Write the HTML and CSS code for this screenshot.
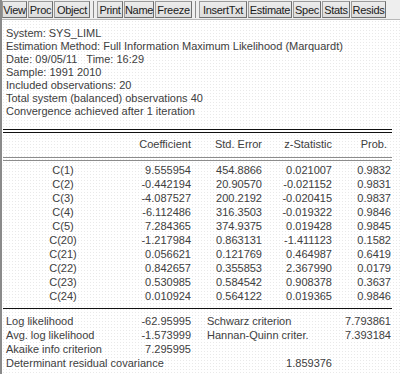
FILE: index.html
```html
<!DOCTYPE html>
<html>
<head>
<meta charset="utf-8">
<link rel="stylesheet" href="styles.css">
</head>
<body>
<div class="win">
  <div class="toolbar">
    <span class="btn b-view">View</span>
    <span class="btn b-proc">Proc</span>
    <span class="btn b-object">Object</span>
    <span class="sep"></span>
    <span class="btn b-print">Print</span>
    <span class="btn b-name">Name</span>
    <span class="btn b-freeze">Freeze</span>
    <span class="sep"></span>
    <span class="btn b-insert">InsertTxt</span>
    <span class="btn b-estimate">Estimate</span>
    <span class="btn b-spec">Spec</span>
    <span class="btn b-stats">Stats</span>
    <span class="btn b-resids">Resids</span>
  </div>
  <div class="body">
    <div class="info">
      <div>System: SYS_LIML</div>
      <div>Estimation Method: Full Information Maximum Likelihood (Marquardt)</div>
      <div>Date: 09/05/11 &nbsp; Time: 16:29</div>
      <div>Sample: 1991 2010</div>
      <div>Included observations: 20</div>
      <div>Total system (balanced) observations 40</div>
      <div>Convergence achieved after 1 iteration</div>
    </div>
    <div class="rule-double"></div>
    <div class="grid head">
      <span></span>
      <span class="num">Coefficient</span>
      <span class="num">Std. Error</span>
      <span class="num">z-Statistic</span>
      <span class="num prob-h">Prob.</span>
    </div>
    <div class="rule-gray"></div>
    <div class="grid rows">
      <span class="lbl">C(1)</span><span class="num">9.555954</span><span class="num">454.8866</span><span class="num">0.021007</span><span class="num">0.9832</span>
      <span class="lbl">C(2)</span><span class="num">-0.442194</span><span class="num">20.90570</span><span class="num">-0.021152</span><span class="num">0.9831</span>
      <span class="lbl">C(3)</span><span class="num">-4.087527</span><span class="num">200.2192</span><span class="num">-0.020415</span><span class="num">0.9837</span>
      <span class="lbl">C(4)</span><span class="num">-6.112486</span><span class="num">316.3503</span><span class="num">-0.019322</span><span class="num">0.9846</span>
      <span class="lbl">C(5)</span><span class="num">7.284365</span><span class="num">374.9375</span><span class="num">0.019428</span><span class="num">0.9845</span>
      <span class="lbl">C(20)</span><span class="num">-1.217984</span><span class="num">0.863131</span><span class="num">-1.411123</span><span class="num">0.1582</span>
      <span class="lbl">C(21)</span><span class="num">0.056621</span><span class="num">0.121769</span><span class="num">0.464987</span><span class="num">0.6419</span>
      <span class="lbl">C(22)</span><span class="num">0.842657</span><span class="num">0.355853</span><span class="num">2.367990</span><span class="num">0.0179</span>
      <span class="lbl">C(23)</span><span class="num">0.530985</span><span class="num">0.584542</span><span class="num">0.908378</span><span class="num">0.3637</span>
      <span class="lbl">C(24)</span><span class="num">0.010924</span><span class="num">0.564122</span><span class="num">0.019365</span><span class="num">0.9846</span>
    </div>
    <div class="rule"></div>
    <div class="grid stats">
      <span class="slbl">Log likelihood</span><span class="num">-62.95995</span><span class="slbl2">Schwarz criterion</span><span class="num">7.793861</span>
      <span class="slbl">Avg. log likelihood</span><span class="num">-1.573999</span><span class="slbl2">Hannan-Quinn criter.</span><span class="num">7.393184</span>
      <span class="slbl">Akaike info criterion</span><span class="num">7.295995</span><span></span><span></span>
      <span class="slbl wide">Determinant residual covariance</span><span class="num">1.859376</span><span></span><span></span>
    </div>
  </div>
</div>
</body>
</html>
```
FILE: styles.css
```css
html, body {
  margin: 0;
  padding: 0;
  background: #ffffff;
}

.win {
  width: 400px;
  height: 374px;
  overflow: hidden;
  border-left: 2px solid #8a8a8a;
  box-sizing: border-box;
  font-family: "Liberation Sans", Arial, sans-serif;
  color: #404040;
  font-size: 11px;
}

.toolbar {
  display: flex;
  align-items: stretch;
  height: 18px;
  padding-top: 1px;
  background: #eeeeee;
  border-bottom: 1px solid #b8b8b8;
  box-sizing: content-box;
}

.btn {
  display: flex;
  align-items: center;
  justify-content: center;
  height: 17px;
  box-sizing: border-box;
  border: 1px solid #9a9a9a;
  border-right-color: #6e6e6e;
  border-bottom-color: #6e6e6e;
  background: linear-gradient(#ececec, #dcdcdc);
  color: #1a1a1a;
  font-family: "Liberation Sans", Arial, sans-serif;
  font-size: 11px;
  letter-spacing: -0.3px;
  margin-right: 1px;
  white-space: nowrap;
}

.sep {
  width: 1px;
  height: 17px;
  background: #8a8a8a;
  margin: 0 3px 0 2px;
}

.b-view { width: 25px; }
.b-proc { width: 25px; }
.b-object { width: 36px; }
.b-print { width: 26px; }
.b-name { width: 30px; }
.b-freeze { width: 37px; }
.b-insert { width: 48px; }
.b-estimate { width: 44px; }
.b-spec { width: 28px; }
.b-stats { width: 28px; }
.b-resids { width: 35px; }

.body {
  background-color: #ffffff;
  background-image: radial-gradient(circle, #e9e9e9 0.7px, transparent 0.8px);
  background-size: 3px 3px;
  height: 355px;
}

.info {
  padding: 7px 0 0 4px;
  line-height: 13px;
  white-space: nowrap;
}

.rule-double {
  margin: 11px 0 0 1px;
  width: 389px;
  height: 2px;
  border-top: 1px solid #111111;
  border-bottom: 1px solid #111111;
}

.rule-gray {
  margin: 6px 0 0 1px;
  width: 389px;
  height: 2px;
  border-top: 1px solid #8c8c8c;
  border-bottom: 1px solid #8c8c8c;
}

.rule {
  margin: 5px 0 0 1px;
  width: 389px;
  height: 0;
  border-top: 1px solid #111111;
}

.grid {
  display: grid;
  grid-template-columns: 120px 68px 71px 70px 59px;
  margin-left: 1px;
  line-height: 14px;
  white-space: nowrap;
}

.head { margin-top: 4px; }
.rows { margin-top: 2px; }
.stats { margin-top: 5px; grid-template-columns: 120px 68px 141px 59px; }

.num { text-align: right; }
.prob-h { padding-right: 4px; }
.lbl { text-align: center; }

.slbl { padding-left: 3px; }
.slbl.wide { grid-column: span 2; }
.slbl2 { padding-left: 16px; }
```
